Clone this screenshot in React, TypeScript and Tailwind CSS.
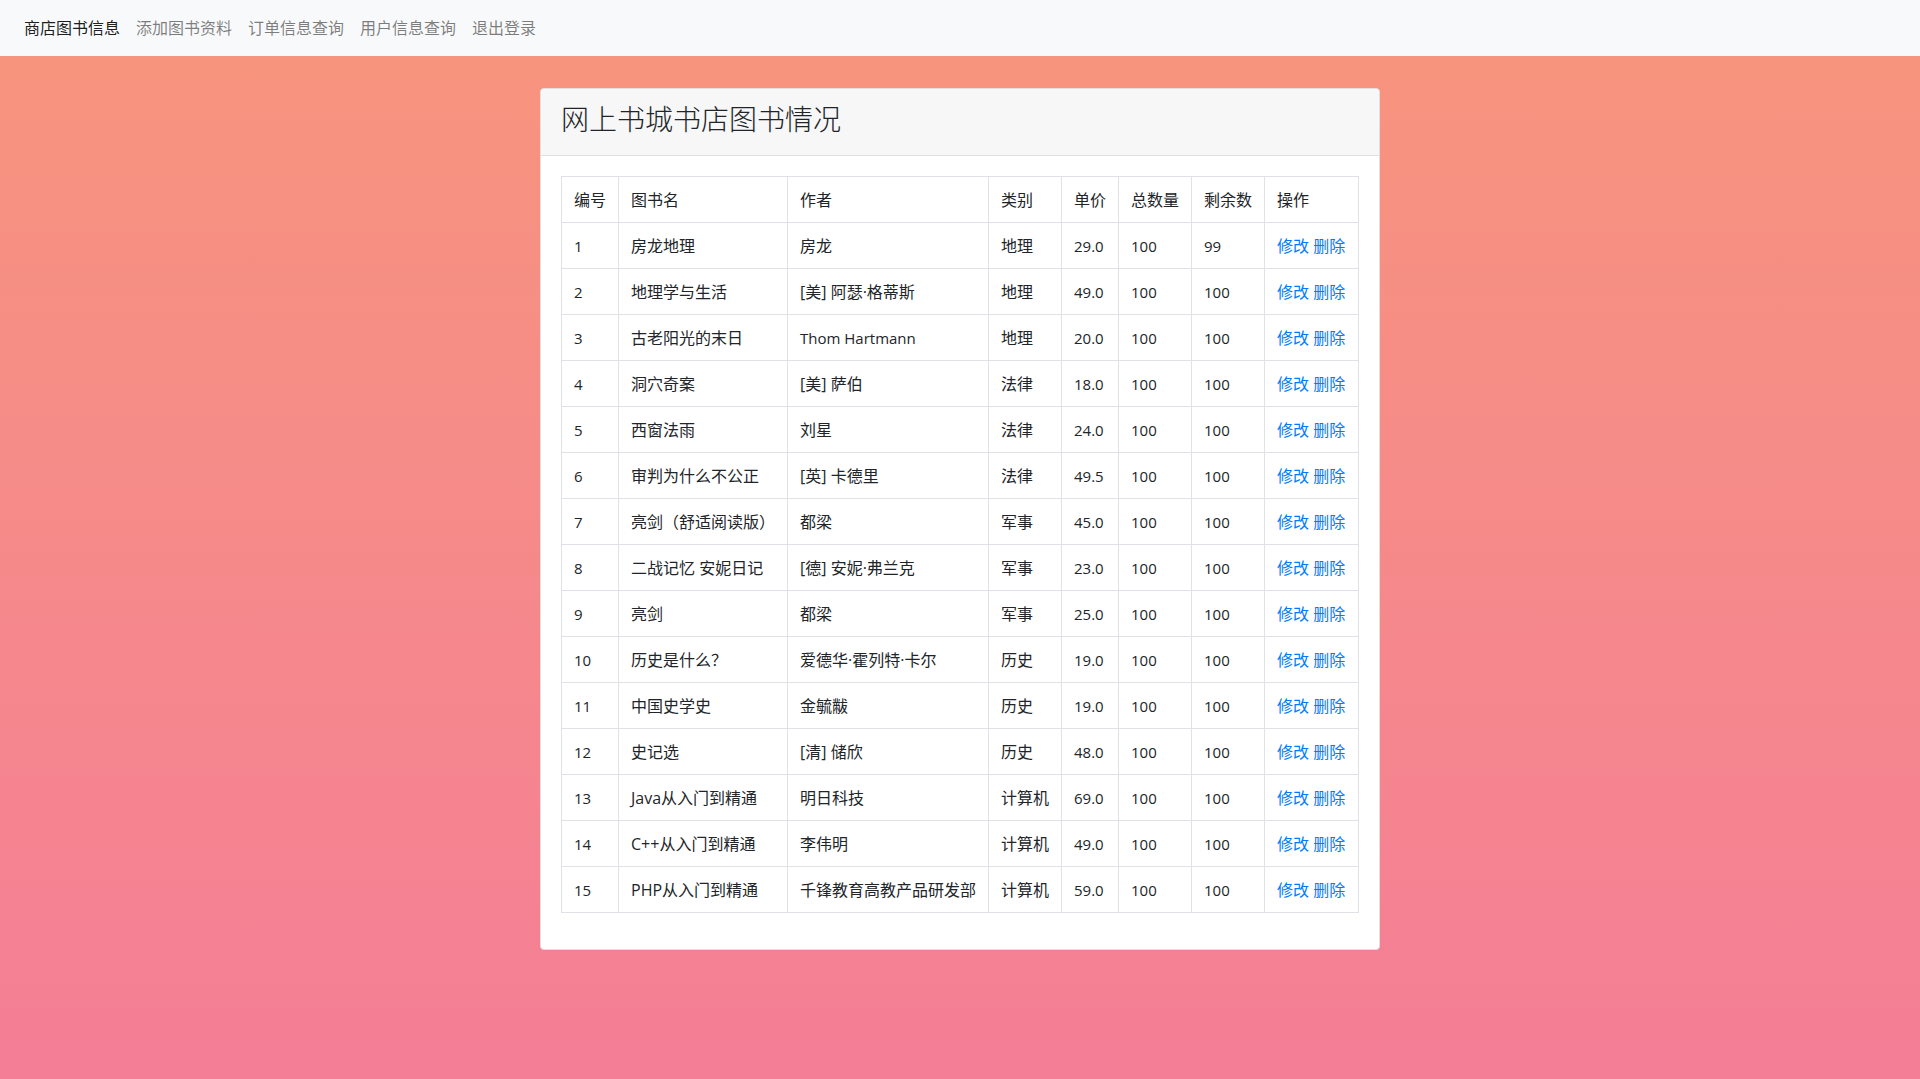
const navItems = ['商店图书信息', '添加图书资料', '订单信息查询', '用户信息查询', '退出登录'];

const columns = [
  { label: '编号', width: 'w-[57px]' },
  { label: '图书名', width: 'w-[169px]' },
  { label: '作者', width: 'w-[201px]' },
  { label: '类别', width: 'w-[73px]' },
  { label: '单价', width: 'w-[57px]' },
  { label: '总数量', width: 'w-[73px]' },
  { label: '剩余数', width: 'w-[73px]' },
  { label: '操作', width: 'w-[94px]' },
];

type Book = [title: string, author: string, category: string, price: string, total: number, left: number];

const books: Book[] = [
  ['房龙地理', '房龙', '地理', '29.0', 100, 99],
  ['地理学与生活', '[美] 阿瑟·格蒂斯', '地理', '49.0', 100, 100],
  ['古老阳光的末日', 'Thom Hartmann', '地理', '20.0', 100, 100],
  ['洞穴奇案', '[美] 萨伯', '法律', '18.0', 100, 100],
  ['西窗法雨', '刘星', '法律', '24.0', 100, 100],
  ['审判为什么不公正', '[英] 卡德里', '法律', '49.5', 100, 100],
  ['亮剑（舒适阅读版）', '都梁', '军事', '45.0', 100, 100],
  ['二战记忆 安妮日记', '[德] 安妮·弗兰克', '军事', '23.0', 100, 100],
  ['亮剑', '都梁', '军事', '25.0', 100, 100],
  ['历史是什么？', '爱德华·霍列特·卡尔', '历史', '19.0', 100, 100],
  ['中国史学史', '金毓黻', '历史', '19.0', 100, 100],
  ['史记选', '[清] 储欣', '历史', '48.0', 100, 100],
  ['Java从入门到精通', '明日科技', '计算机', '69.0', 100, 100],
  ['C++从入门到精通', '李伟明', '计算机', '49.0', 100, 100],
  ['PHP从入门到精通', '千锋教育高教产品研发部', '计算机', '59.0', 100, 100],
];

const cell = 'border border-[#dee2e6] px-3 pt-[13px] pb-[11px] text-left font-normal whitespace-nowrap';
const latinCell = `${cell} text-[15px]`;

const isLatin = (text: string) => /^[\x20-\x7e]+$/.test(text);

function BookRow({ id, book }: { id: number; book: Book }) {
  const [title, author, category, price, total, left] = book;
  return (
    <tr>
      <td className={latinCell}>{id}</td>
      <td className={cell}>{title}</td>
      <td className={isLatin(author) ? latinCell : cell}>{author}</td>
      <td className={cell}>{category}</td>
      <td className={latinCell}>{price}</td>
      <td className={latinCell}>{total}</td>
      <td className={latinCell}>{left}</td>
      <td className={cell}>
        <a href="#edit" className="text-[#007bff] hover:underline">修改</a>{' '}
        <a href="#delete" className="text-[#007bff] hover:underline">删除</a>
      </td>
    </tr>
  );
}

export default function App() {
  return (
    <div className="min-h-screen bg-linear-to-b from-[#f7957c] to-[#f47e96] font-['Open_Sans','Noto_Sans_CJK_SC',sans-serif] text-base text-[#212529]">
      <nav className="flex h-14 items-center gap-4 bg-[#f8f9fa] px-6">
        {navItems.map((item, i) => (
          <a key={item} href="#" className={i === 0 ? 'text-black/90' : 'text-black/50'}>
            {item}
          </a>
        ))}
      </nav>
      <main className="mx-auto mt-8 max-w-[840px] rounded border border-[#dfdfdf] bg-white">
        <header className="rounded-t border-b border-[#dfdfdf] bg-[#f7f7f7] px-5 pt-[13px] pb-[19px]">
          <h3 className="text-[28px] leading-[34px] font-light">网上书城书店图书情况</h3>
        </header>
        <div className="px-5 pt-5 pb-9">
          <table className="w-full table-fixed border-collapse leading-[21px]">
            <thead>
              <tr>
                {columns.map((c) => (
                  <th key={c.label} scope="col" className={`${cell} ${c.width}`}>
                    {c.label}
                  </th>
                ))}
              </tr>
            </thead>
            <tbody>
              {books.map((book, i) => (
                <BookRow key={i} id={i + 1} book={book} />
              ))}
            </tbody>
          </table>
        </div>
      </main>
    </div>
  );
}
